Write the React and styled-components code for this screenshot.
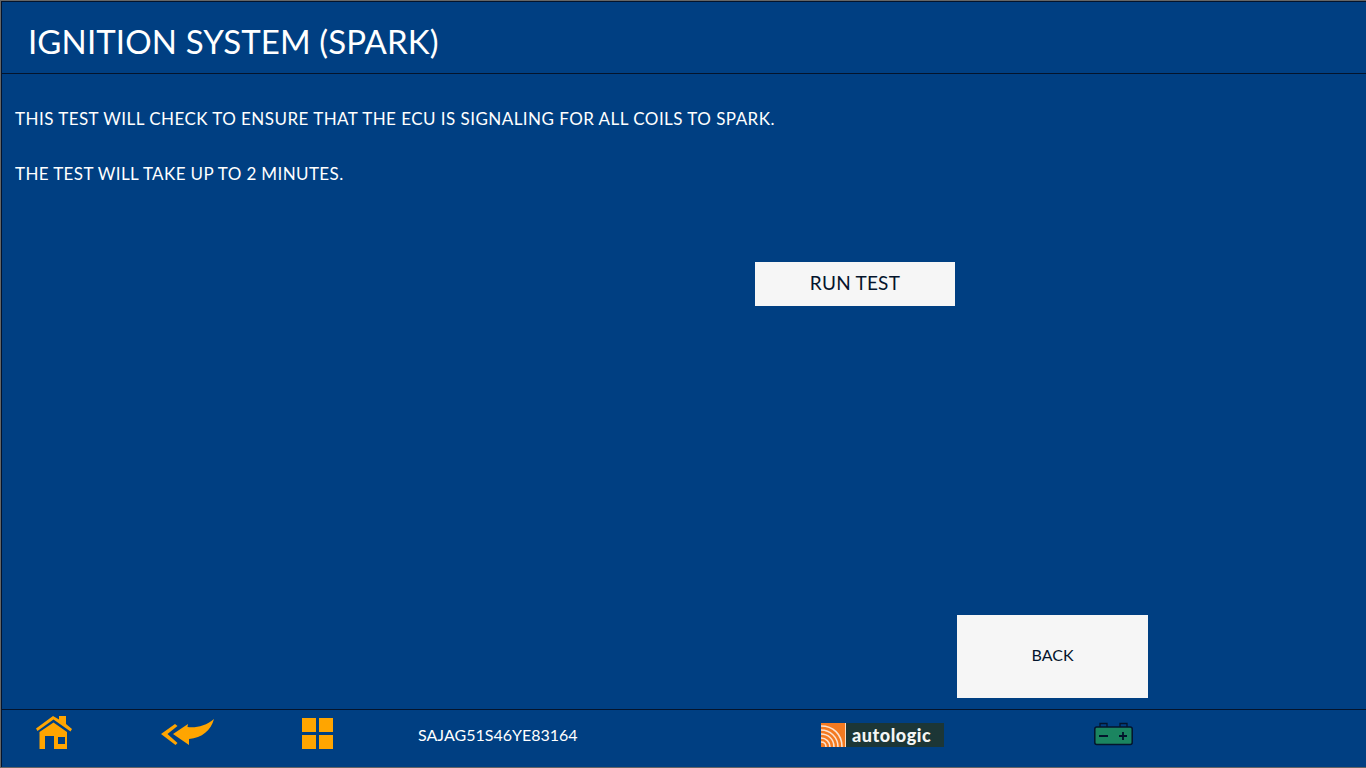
import styled, { createGlobalStyle } from "styled-components"

const GlobalStyle = createGlobalStyle`
  html, body {
    margin: 0;
    padding: 0;
    background: #003f82;
  }
`

const Frame = styled.div`
  width: 1366px;
  height: 768px;
  box-sizing: border-box;
  display: flex;
  flex-direction: column;
  background: #003f82;
  border-left: 1px solid #666;
  border-top: 1px solid #666;
  border-bottom: 1px solid #666;
  box-shadow: inset 1px 1px 0 #04142c;
  overflow: hidden;
  font-family: Lato, "Open Sans", sans-serif;
  color: #fff;
`

const Header = styled.header`
  height: 72px;
  flex: none;
  display: flex;
  align-items: center;
  padding-left: 27px;
  border-bottom: 1px solid #04142c;
`

const Title = styled.h1`
  margin: 8px 0 0;
  font-size: 33px;
  font-weight: 400;
  letter-spacing: 0.12px;
  white-space: nowrap;
`

const Main = styled.main`
  flex: 1;
  display: flex;
  flex-direction: column;
  padding: 35px 0 11px 14px;
`

const Line = styled.p`
  margin: 0 0 35px;
  height: 20px;
  line-height: 20px;
  font-size: 17px;
  letter-spacing: ${p => p.$track}px;
  white-space: nowrap;
`

const RunRow = styled.div`
  margin-top: 43px;
  padding-left: 740px;
`

const Button = styled.button`
  display: block;
  border: 0;
  padding: 0 0 ${p => p.$lift}px;
  background: #f6f6f6;
  color: #04142c;
  font-family: inherit;
  width: ${p => p.$w}px;
  height: ${p => p.$h}px;
  font-size: ${p => p.$size}px;
  letter-spacing: ${p => p.$track}px;
`

const BackRow = styled.div`
  margin-top: auto;
  padding-left: 942px;
`

const Footer = styled.footer`
  height: 58px;
  flex: none;
  box-sizing: border-box;
  display: flex;
  align-items: center;
  padding-bottom: 11px;
  border-top: 1px solid #04142c;
`

const Slot = styled.div`
  flex: none;
  display: flex;
  align-items: center;
  width: ${p => p.$w}px;
  padding-left: ${p => p.$left || 0}px;
  padding-top: ${p => p.$top || 0}px;
  box-sizing: border-box;
`

const Vin = styled.span`
  font-size: 16px;
  letter-spacing: 0;
`

const Logo = styled.div`
  display: flex;
  align-items: center;
  height: 24px;
  width: 123px;
  background: #1c3636;
`

const LogoText = styled.span`
  margin-left: 6px;
  font-size: 18px;
  font-weight: 900;
  color: #f4f6f5;
  letter-spacing: 0.55px;
`

const HomeIcon = () => (
  <svg width="37" height="34" viewBox="0 0 37 34">
    <path fill="#ffa500" d="M17 0 23 3.500V0h7v8l6 5-1.500 2.500L17.500 3.500 1.500 15 0 12.500z" />
    <path fill="#ffa500" fillRule="evenodd" d="M17.500 6.500 31 16v17H18V20H9v13H3.500V16zM22 21v7h7v-7z" />
  </svg>
)

const BackIcon = () => (
  <svg width="54" height="30" viewBox="0 0 54 30">
    <path fill="#ffa500" d="M1 16 15 6l2.500 2-10 8 10 9-2 2z" />
    <path fill="#ffa500" d="M13 16 28 6l-.5 3C36 10 46 8 54 1 51 12 42 20 29 21l0 6z" />
  </svg>
)

const GridIcon = () => (
  <svg width="31" height="31" viewBox="0 0 31 31">
    <path fill="#ffa500" d="M0 0h14v14H0zM17 0h14v14H17zM0 17h14v14H0zM17 17h14v14H17z" />
  </svg>
)

const WavesIcon = () => (
  <svg width="25" height="24" viewBox="0 0 25 24">
    <rect width="25" height="24" fill="#f47a20" />
    <rect x="24" width="1" height="24" fill="#f8dcc4" />
    <g fill="none" stroke="#fbe3d0" strokeWidth="1.600">
      <path d="M0 3C12 3 21 11 21 24" />
      <path d="M0 7C9 7 17 14 17 24" />
      <path d="M0 11C7 11 13 16 13 24" />
      <path d="M0 15C5 15 9 19 9 24" />
      <path d="M0 19C3 19 5 21 5 24" />
    </g>
  </svg>
)

const BatteryIcon = () => (
  <svg width="39" height="24" viewBox="0 0 39 24">
    <path fill="none" stroke="#04142c" strokeWidth="1.300" d="M6 5V1.500h7V5M26 5V1.500h7V5" />
    <rect x="0.800" y="5" width="37.400" height="17.500" rx="2" fill="#1b8560" stroke="#04142c" strokeWidth="1.500" />
    <path fill="none" stroke="#04142c" strokeWidth="1.800" d="M5 14h9M25 14h8M29 10v8" />
  </svg>
)

export default function App() {
  return (
    <>
      <GlobalStyle />
      <Frame>
        <Header>
          <Title>IGNITION SYSTEM (SPARK)</Title>
        </Header>
        <Main>
          <Line $track={0.46}>THIS TEST WILL CHECK TO ENSURE THAT THE ECU IS SIGNALING FOR ALL COILS TO SPARK.</Line>
          <Line $track={0.38}>THE TEST WILL TAKE UP TO 2 MINUTES.</Line>
          <RunRow>
            <Button $w={200} $h={44} $size={19} $lift={3} $track={0.25}>RUN TEST</Button>
          </RunRow>
          <BackRow>
            <Button $w={191} $h={83} $size={16} $lift={4} $track={0}>BACK</Button>
          </BackRow>
        </Main>
        <Footer>
          <Slot $w={159} $left={35}><HomeIcon /></Slot>
          <Slot $w={142}><BackIcon /></Slot>
          <Slot $w={116}><GridIcon /></Slot>
          <Slot $w={403} $top={2}><Vin>SAJAG51S46YE83164</Vin></Slot>
          <Slot $w={273} $top={4}>
            <Logo>
              <WavesIcon />
              <LogoText>autologic</LogoText>
            </Logo>
          </Slot>
          <Slot $w={60} $top={2}><BatteryIcon /></Slot>
        </Footer>
      </Frame>
    </>
  )
}
